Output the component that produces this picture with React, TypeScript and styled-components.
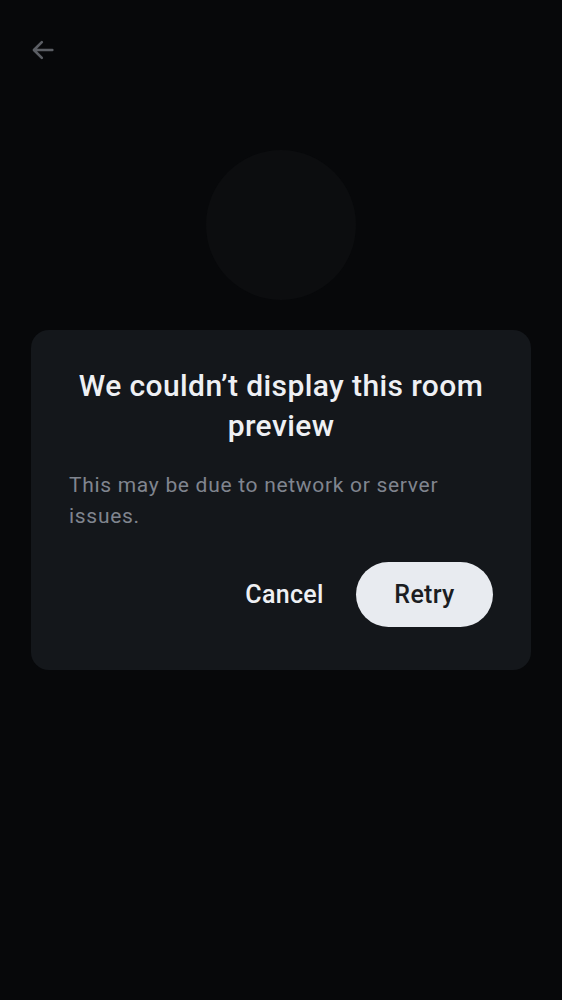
import React from "react";
import styled, { createGlobalStyle } from "styled-components";

const Global = createGlobalStyle`
  html, body { margin: 0; padding: 0; background: #07080a; }
  body { font-family: Roboto, "Noto Sans", sans-serif; }
`;

const Screen = styled.div`
  width: 562px;
  height: 1000px;
  background: #07080a;
  display: flex;
  flex-direction: column;
  box-sizing: border-box;
`;

const TopBar = styled.div`
  height: 100px;
  display: flex;
  align-items: center;
  padding-left: 29px;
`;

const BackButton = styled.button`
  width: 28px;
  height: 28px;
  padding: 0;
  border: none;
  background: transparent;
  display: flex;
  align-items: center;
  justify-content: center;
  color: #5b5e64;
`;

const Avatar = styled.div`
  width: 150px;
  height: 150px;
  border-radius: 50%;
  background: #0c0d0f;
  align-self: center;
  margin-top: 50px;
`;

const Card = styled.div`
  margin: 30px 31px 0;
  background: #14171b;
  border-radius: 18px;
  padding: 36px 38px 43px;
  display: flex;
  flex-direction: column;
`;

const Title = styled.h2`
  margin: 0;
  font-family: Roboto, sans-serif;
  font-weight: 500;
  font-size: 30px;
  line-height: 40px;
  letter-spacing: 0.4px;
  color: #eef0f4;
  text-align: center;
`;

const Body = styled.p`
  margin: 24px 0 0;
  font-family: Roboto, sans-serif;
  font-size: 21px;
  line-height: 31px;
  letter-spacing: 0.7px;
  color: #80858f;
`;

const Actions = styled.div`
  display: flex;
  justify-content: flex-end;
  gap: 3px;
  margin-top: 30px;
`;

const Button = styled.button<{ $filled?: boolean }>`
  width: 137px;
  height: 65px;
  padding: 0;
  border-radius: 33px;
  border: none;
  font-family: Roboto, sans-serif;
  font-weight: 500;
  font-size: 25px;
  letter-spacing: 0.3px;
  background: ${(p) => (p.$filled ? "#e8ebf0" : "transparent")};
  color: ${(p) => (p.$filled ? "#1b1d22" : "#eef0f4")};
`;

export default function App() {
  return (
    <Screen>
      <Global />
      <TopBar>
        <BackButton aria-label="Back">
          <svg width="28" height="28" viewBox="0 0 24 24" fill="none">
            <path
              d="M20 12H4.5M11 5.2L4.2 12L11 18.8"
              stroke="currentColor"
              strokeWidth="2.2"
              strokeLinecap="round"
              strokeLinejoin="round"
            />
          </svg>
        </BackButton>
      </TopBar>
      <Avatar />
      <Card>
        <Title>We couldn’t display this room preview</Title>
        <Body>This may be due to network or server issues.</Body>
        <Actions>
          <Button>Cancel</Button>
          <Button $filled>Retry</Button>
        </Actions>
      </Card>
    </Screen>
  );
}
